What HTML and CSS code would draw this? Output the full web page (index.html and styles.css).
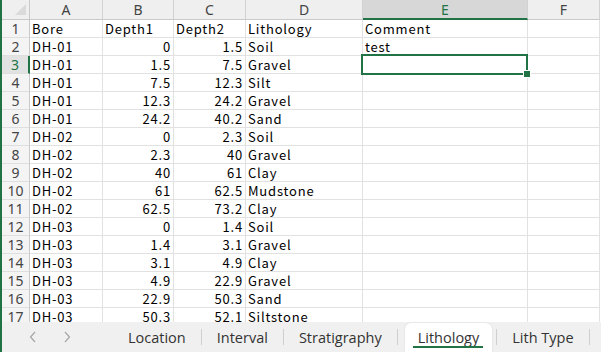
FILE: index.html
```html
<!DOCTYPE html>
<html>
<head>
<meta charset="utf-8">
<link rel="stylesheet" href="styles.css">
</head>
<body>
<div class="app">
  <div class="sheet">
    <div class="corner"><span class="tri"></span></div>
    <div class="ch">A</div><div class="ch">B</div><div class="ch">C</div><div class="ch">D</div><div class="ch ch-sel">E</div><div class="ch">F</div>

    <div class="rh">1</div><div class="c">Bore</div><div class="c">Depth1</div><div class="c">Depth2</div><div class="c">Lithology</div><div class="c">Comment</div><div class="c"></div>
    <div class="rh">2</div><div class="c">DH-01</div><div class="c n">0</div><div class="c n">1.5</div><div class="c">Soil</div><div class="c">test</div><div class="c"></div>
    <div class="rh rh-sel">3</div><div class="c">DH-01</div><div class="c n">1.5</div><div class="c n">7.5</div><div class="c">Gravel</div><div class="c active"><span class="selbox"><span class="handle"></span></span></div><div class="c"></div>
    <div class="rh">4</div><div class="c">DH-01</div><div class="c n">7.5</div><div class="c n">12.3</div><div class="c">Silt</div><div class="c"></div><div class="c"></div>
    <div class="rh">5</div><div class="c">DH-01</div><div class="c n">12.3</div><div class="c n">24.2</div><div class="c">Gravel</div><div class="c"></div><div class="c"></div>
    <div class="rh">6</div><div class="c">DH-01</div><div class="c n">24.2</div><div class="c n">40.2</div><div class="c">Sand</div><div class="c"></div><div class="c"></div>
    <div class="rh">7</div><div class="c">DH-02</div><div class="c n">0</div><div class="c n">2.3</div><div class="c">Soil</div><div class="c"></div><div class="c"></div>
    <div class="rh">8</div><div class="c">DH-02</div><div class="c n">2.3</div><div class="c n">40</div><div class="c">Gravel</div><div class="c"></div><div class="c"></div>
    <div class="rh">9</div><div class="c">DH-02</div><div class="c n">40</div><div class="c n">61</div><div class="c">Clay</div><div class="c"></div><div class="c"></div>
    <div class="rh">10</div><div class="c">DH-02</div><div class="c n">61</div><div class="c n">62.5</div><div class="c">Mudstone</div><div class="c"></div><div class="c"></div>
    <div class="rh">11</div><div class="c">DH-02</div><div class="c n">62.5</div><div class="c n">73.2</div><div class="c">Clay</div><div class="c"></div><div class="c"></div>
    <div class="rh">12</div><div class="c">DH-03</div><div class="c n">0</div><div class="c n">1.4</div><div class="c">Soil</div><div class="c"></div><div class="c"></div>
    <div class="rh">13</div><div class="c">DH-03</div><div class="c n">1.4</div><div class="c n">3.1</div><div class="c">Gravel</div><div class="c"></div><div class="c"></div>
    <div class="rh">14</div><div class="c">DH-03</div><div class="c n">3.1</div><div class="c n">4.9</div><div class="c">Clay</div><div class="c"></div><div class="c"></div>
    <div class="rh">15</div><div class="c">DH-03</div><div class="c n">4.9</div><div class="c n">22.9</div><div class="c">Gravel</div><div class="c"></div><div class="c"></div>
    <div class="rh">16</div><div class="c">DH-03</div><div class="c n">22.9</div><div class="c n">50.3</div><div class="c">Sand</div><div class="c"></div><div class="c"></div>
    <div class="rh">17</div><div class="c">DH-03</div><div class="c n">50.3</div><div class="c n">52.1</div><div class="c">Siltstone</div><div class="c"></div><div class="c"></div>
  </div>
  <div class="tabbar">
    <div class="nav">
      <svg width="8" height="12" viewBox="0 0 8 12"><path d="M6 1 L1.5 6 L6 11" fill="none" stroke="#a6a6a6" stroke-width="1.2"/></svg>
      <svg width="8" height="12" viewBox="0 0 8 12"><path d="M2 1 L6.5 6 L2 11" fill="none" stroke="#a6a6a6" stroke-width="1.2"/></svg>
    </div>
    <div class="tab">Location</div><span class="sep"></span>
    <div class="tab">Interval</div><span class="sep"></span>
    <div class="tab">Stratigraphy</div><span class="sep"></span>
    <div class="tab tab-active"><span class="tab-label">Lithology</span></div><span class="sep"></span>
    <div class="tab">Lith Type</div><span class="sep"></span>
  </div>
</div>
</body>
</html>
```
FILE: styles.css
```css
html, body {
  margin: 0;
  padding: 0;
  background: #ffffff;
}
.app {
  width: 601px;
  height: 352px;
  overflow: hidden;
  border-left: 2px solid #217346;
  box-sizing: border-box;
  display: flex;
  flex-direction: column;
  position: relative;
}
.sheet {
  display: grid;
  grid-template-columns: 28px 73px 71px 72px 117px 165px 72px;
  grid-template-rows: 20px;
  grid-auto-rows: 18px;
  height: 322px;
  overflow: hidden;
  flex: none;
  font-family: "Noto Sans CJK JP", "Liberation Sans", sans-serif;
  font-size: 13px;
  letter-spacing: 0.8px;
  color: #000;
}
.corner {
  background: #efefef;
  border-right: 1px solid #c9c9c9;
  border-bottom: 1px solid #c9c9c9;
  position: relative;
}
.tri {
  position: absolute;
  right: 3px;
  bottom: 4px;
  width: 0;
  height: 0;
  border-left: 11px solid transparent;
  border-bottom: 11px solid #dadada;
}
.ch {
  background: #efefef;
  border-right: 1px solid #d2d2d2;
  border-bottom: 1px solid #c9c9c9;
  text-align: center;
  font-family: "Noto Sans", "Liberation Sans", sans-serif;
  font-size: 14px;
  letter-spacing: 0;
  line-height: 20px;
  color: #444;
}
.ch-sel {
  background: #d7d7d7;
  color: #217346;
  border-bottom: 2px solid #217346;
  line-height: 19px;
}
.rh {
  background: #f4f4f4;
  border-right: 1px solid #c9c9c9;
  border-bottom: 1px solid #dedede;
  text-align: center;
  font-family: "Noto Sans", "Liberation Sans", sans-serif;
  font-size: 14px;
  letter-spacing: 0;
  line-height: 17px;
  color: #444;
}
.rh-sel {
  background: #e2e2e2;
  color: #217346;
  border-right: 2px solid #217346;
}
.c {
  border-right: 1px solid #e1e1e1;
  border-bottom: 1px solid #e1e1e1;
  padding: 0 2px 0 2px;
  line-height: 17px;
  white-space: nowrap;
  overflow: visible;
}
.n {
  text-align: right;
}
.active {
  position: relative;
}
.selbox {
  position: absolute;
  left: -2px;
  top: -2px;
  right: -1px;
  bottom: -2px;
  border: 2px solid #217346;
  z-index: 2;
}
.handle {
  position: absolute;
  right: -5px;
  bottom: -5px;
  width: 6px;
  height: 6px;
  background: #217346;
  border: 1px solid #fff;
}
.tabbar {
  flex: 1;
  background: #f0f0f0;
  display: flex;
  align-items: stretch;
  font-family: "Open Sans", "Noto Sans", sans-serif;
  font-size: 14.5px;
  color: #333;
}
.nav {
  display: flex;
  align-items: center;
  gap: 26px;
  padding-left: 27px;
  width: 111px;
  box-sizing: border-box;
}
.tab {
  display: flex;
  align-items: center;
  padding: 0 15px;
  padding-top: 1px;
}
.sep {
  width: 1px;
  height: 16px;
  background: #cfcfcf;
  align-self: center;
}
.tab-active {
  background: #ffffff;
  border-radius: 6px 6px 0 0;
  margin: 1px 4px 0 7px;
  padding: 0 13px;
  position: relative;
  box-shadow: 0 0 2px rgba(0,0,0,0.12);
}
.tab-label {
  padding-bottom: 1px;
}
.tab-active::after {
  content: "";
  position: absolute;
  left: 8px;
  right: 9px;
  bottom: 4px;
  height: 2px;
  background: #217346;
}
```
